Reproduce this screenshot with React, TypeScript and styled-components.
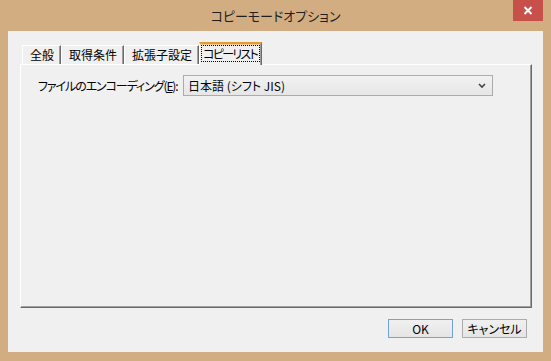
import React from "react";
import styled, { createGlobalStyle } from "styled-components";

const GlobalStyle = createGlobalStyle`
  html, body {
    margin: 0;
    padding: 0;
    background: #d3ad82;
  }
  body {
    font-family: "Noto Sans CJK JP", "Noto Sans", sans-serif;
    font-size: 12px;
    color: #000;
  }
  * {
    box-sizing: border-box;
  }
`;

const Window = styled.div`
  width: 551px;
  height: 361px;
  background: #d3ad82;
  display: flex;
  flex-direction: column;
  padding: 0 8px 9px 8px;
`;

const TitleBar = styled.div`
  height: 31px;
  display: grid;
  grid-template-columns: 30px 1fr 30px;
  align-items: start;
`;

const Title = styled.div`
  grid-column: 2;
  text-align: center;
  line-height: 32px;
  font-size: 13px;
  color: #1e1e1e;
  font-feature-settings: "palt";
`;

const CloseButton = styled.div`
  grid-column: 3;
  width: 30px;
  height: 21px;
  background: #c7504b;
  display: flex;
  align-items: center;
  justify-content: center;
`;

const Client = styled.div`
  flex: 1;
  background: #f0f0f0;
  padding: 11px 11px 0 12px;
  display: flex;
  flex-direction: column;
`;

const TabStrip = styled.div`
  height: 22px;
  display: flex;
  align-items: flex-end;
  padding-left: 2px;
`;

const Tab = styled.div<{ $active?: boolean }>`
  height: ${(p) => (p.$active ? "23px" : "19px")};
  margin-bottom: ${(p) => (p.$active ? "-1px" : "0")};
  position: relative;
  z-index: ${(p) => (p.$active ? 1 : 0)};
  background: #f0f0f0;
  padding: ${(p) => (p.$active ? "1px 2px 0 2px" : "1px 6px 0 7px")};
  border-left: 1px solid #ffffff;
  border-top: ${(p) => (p.$active ? "2px solid #e59a35" : "1px solid #ffffff")};
  border-right: 1px solid #696969;
  box-shadow: ${(p) =>
    p.$active ? "inset -1px 0 #a0a0a0, inset 0 1px #f6cf8f" : "inset -1px 0 #a0a0a0"};
  line-height: 16px;
  white-space: nowrap;
  font-feature-settings: "palt";
`;

const FocusText = styled.span`
  display: inline-block;
  outline: 1px dotted #000;
  outline-offset: 0;
  padding: 0 2px 0 1px;
  line-height: 15px;
  margin-top: 1px;
  letter-spacing: -1.7px;
`;

const Panel = styled.div`
  height: 244px;
  border-top: 1px solid #ffffff;
  border-left: 1px solid #ffffff;
  border-right: 1px solid #696969;
  border-bottom: 1px solid #696969;
  box-shadow: inset -1px -1px #a0a0a0;
  padding: 10px 0 0 17px;
`;

const FieldRow = styled.div`
  display: flex;
  align-items: center;
`;

const Label = styled.div`
  width: 145px;
  white-space: nowrap;
  letter-spacing: -1.1px;
  font-feature-settings: "palt";
`;

const Combo = styled.div`
  width: 310px;
  height: 21px;
  border: 1px solid #acacac;
  background: linear-gradient(#f2f2f2, #e6e6e6);
  display: flex;
  align-items: center;
  justify-content: space-between;
  padding: 0 6px 0 4px;
  font-feature-settings: "palt";
`;

const Footer = styled.div`
  display: flex;
  justify-content: flex-end;
  gap: 9px;
  margin-top: 11px;
  padding-right: 5px;
`;

const Button = styled.div<{ $primary?: boolean }>`
  width: 65px;
  height: 19px;
  border: 1px solid ${(p) => (p.$primary ? "#6ea5da" : "#acacac")};
  background: linear-gradient(#f0f0f0, #e5e5e5);
  display: flex;
  align-items: center;
  justify-content: center;
  font-size: 12px;
  font-feature-settings: "palt";
`;

const tabs = ["全般", "取得条件", "拡張子設定"];

export default function App() {
  return (
    <>
      <GlobalStyle />
      <Window>
        <TitleBar>
          <Title>コピーモードオプション</Title>
          <CloseButton>
            <svg width="10" height="9" viewBox="0 0 10 9">
              <path d="M1.5 1 L8.5 8 M8.5 1 L1.5 8" stroke="#fff" strokeWidth="2" />
            </svg>
          </CloseButton>
        </TitleBar>
        <Client>
          <TabStrip>
            {tabs.map((t) => (
              <Tab key={t}>{t}</Tab>
            ))}
            <Tab $active>
              <FocusText>コピーリスト</FocusText>
            </Tab>
          </TabStrip>
          <Panel>
            <FieldRow>
              <Label>ファイルのエンコーディング(<u>E</u>):</Label>
              <Combo>
                <span>日本語 (シフト JIS)</span>
                <svg width="8" height="6" viewBox="0 0 8 6">
                  <path d="M1 1 L4 4 L7 1" stroke="#444" strokeWidth="1.6" fill="none" />
                </svg>
              </Combo>
            </FieldRow>
          </Panel>
          <Footer>
            <Button $primary>OK</Button>
            <Button>キャンセル</Button>
          </Footer>
        </Client>
      </Window>
    </>
  );
}
